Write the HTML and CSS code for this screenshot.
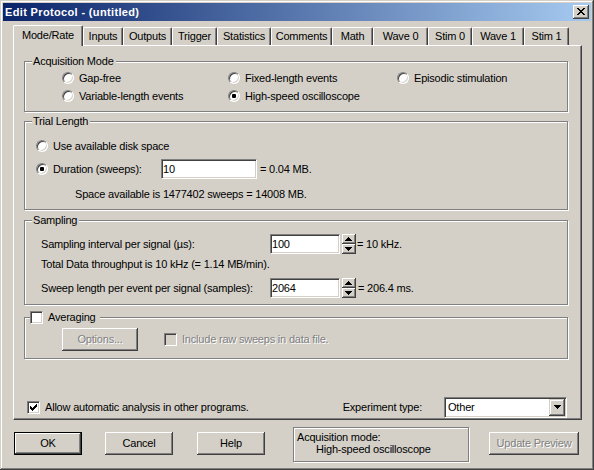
FILE: index.html
```html
<!DOCTYPE html>
<html>
<head>
<meta charset="utf-8">
<title>Edit Protocol</title>
<link rel="stylesheet" href="styles.css">
</head>
<body>
<div class="window">
  <div class="titlebar">
    <span class="title">Edit Protocol - (untitled)</span>
    <span class="close"><svg width="8" height="7" shape-rendering="crispEdges"><path d="M0 0h2v1H0zM6 0h2v1H6zM1 1h2v1H1zM5 1h2v1H5zM2 2h4v1H2zM3 3h2v1H3zM2 4h4v1H2zM1 5h2v1H1zM5 5h2v1H5zM0 6h2v1H0zM6 6h2v1H6z"/></svg></span>
  </div>
  <div class="client">
    <div class="tabs">
      <div class="tab sel">Mode/Rate</div>
      <div class="tab">Inputs</div>
      <div class="tab">Outputs</div>
      <div class="tab">Trigger</div>
      <div class="tab">Statistics</div>
      <div class="tab">Comments</div>
      <div class="tab">Math</div>
      <div class="tab">Wave 0</div>
      <div class="tab">Stim 0</div>
      <div class="tab">Wave 1</div>
      <div class="tab">Stim 1</div>
    </div>
    <div class="panel">
      <div class="group acq">
        <div class="legend">Acquisition Mode</div>
        <div class="acq-grid">
          <div class="opt"><span class="radio"></span>Gap-free</div>
          <div class="opt"><span class="radio"></span>Fixed-length events</div>
          <div class="opt"><span class="radio"></span>Episodic stimulation</div>
          <div class="opt"><span class="radio"></span>Variable-length events</div>
          <div class="opt"><span class="radio on"></span>High-speed oscilloscope</div>
        </div>
      </div>

      <div class="group trial">
        <div class="legend">Trial Length</div>
        <div class="trial-body">
          <div class="opt row1"><span class="radio"></span>Use available disk space</div>
          <div class="dur">
            <div class="opt"><span class="radio on"></span><span class="durlabel">Duration (sweeps):</span></div>
            <span class="edit w96">10</span>
            <span class="after3">= 0.04 MB.</span>
          </div>
          <div class="space">Space available is 1477402 sweeps = 14008 MB.</div>
        </div>
      </div>

      <div class="group samp">
        <div class="legend">Sampling</div>
        <div class="samp-body">
          <div class="srow">
            <span class="slabel">Sampling interval per signal (µs):</span>
            <span class="edit w70">100</span>
            <span class="spin">
              <span class="sbtn"><svg width="7" height="4" shape-rendering="crispEdges"><path d="M3 0h1v1H3zM2 1h3v1H2zM1 2h5v1H1zM0 3h7v1H0z"/></svg></span>
              <span class="sbtn"><svg width="7" height="4" shape-rendering="crispEdges"><path d="M0 0h7v1H0zM1 1h5v1H1zM2 2h3v1H2zM3 3h1v1H3z"/></svg></span>
            </span>
            <span class="after1">= 10 kHz.</span>
          </div>
          <div class="thru">Total Data throughput is 10 kHz (= 1.14 MB/min).</div>
          <div class="srow">
            <span class="slabel">Sweep length per event per signal (samples):</span>
            <span class="edit w70">2064</span>
            <span class="spin">
              <span class="sbtn"><svg width="7" height="4" shape-rendering="crispEdges"><path d="M3 0h1v1H3zM2 1h3v1H2zM1 2h5v1H1zM0 3h7v1H0z"/></svg></span>
              <span class="sbtn"><svg width="7" height="4" shape-rendering="crispEdges"><path d="M0 0h7v1H0zM1 1h5v1H1zM2 2h3v1H2zM3 3h1v1H3z"/></svg></span>
            </span>
            <span class="after2">= 206.4 ms.</span>
          </div>
        </div>
      </div>

      <div class="group avg">
        <div class="legend avg-legend"><span class="check"></span>Averaging</div>
        <div class="avg-body">
          <span class="btn options dis">Options...</span>
          <span class="check disbox"></span>
          <span class="inc dis">Include raw sweeps in data file.</span>
        </div>
      </div>

      <div class="spacer"></div>

      <div class="bottom">
        <div class="opt"><span class="check"><svg width="7" height="7" shape-rendering="crispEdges"><path d="M6 0h1v1H6zM5 1h2v1H5zM0 2h1v1H0zM4 2h3v1H4zM0 3h2v1H0zM3 3h3v1H3zM0 4h5v1H0zM1 5h3v1H1zM2 6h1v1H2z"/></svg></span>Allow automatic analysis in other programs.</div>
        <span class="exp-label">Experiment type:</span>
        <div class="combo">
          <span class="combo-field">Other</span>
          <span class="combo-btn"><svg width="7" height="4" shape-rendering="crispEdges"><path d="M0 0h7v1H0zM1 1h5v1H1zM2 2h3v1H2zM3 3h1v1H3z"/></svg></span>
        </div>
      </div>
    </div>

    <div class="buttons">
      <span class="btn ok">OK</span>
      <span class="btn cancel">Cancel</span>
      <span class="btn help">Help</span>
      <div class="status">
        <div>Acquisition mode:</div>
        <div class="indent">High-speed oscilloscope</div>
      </div>
      <span class="btn update dis">Update Preview</span>
    </div>
  </div>
</div>
</body>
</html>
```

FILE: styles.css
```css
* { box-sizing: border-box; }
html, body { margin: 0; padding: 0; }
body {
  background: #d4d0c8;
  font-family: "Liberation Sans", Arial, sans-serif;
  font-size: 11px;
  line-height: 13px;
  letter-spacing: -0.2px;
  color: #000;
  overflow: hidden;
}
.window {
  width: 594px;
  height: 470px;
  padding: 3px;
  background: #d4d0c8;
  box-shadow: inset -1px -1px #404040, inset 1px 1px #d4d0c8, inset -2px -2px #808080, inset 2px 2px #fff;
  display: flex;
  flex-direction: column;
}
.titlebar {
  height: 18px;
  flex: none;
  display: flex;
  align-items: center;
  justify-content: space-between;
  padding: 0 2px;
  background: linear-gradient(to right, #0a246a, #a6caf0);
}
.title {
  color: #fff;
  font-weight: bold;
  letter-spacing: 0.35px;
}
.close {
  width: 16px;
  height: 14px;
  display: flex;
  align-items: center;
  justify-content: center;
  padding: 0 1px 1px 0;
  background: #d4d0c8;
  box-shadow: inset -1px -1px #404040, inset 1px 1px #fff, inset -2px -2px #808080, inset 2px 2px #d4d0c8;
}
.close svg, .check svg, .sbtn svg, .combo-btn svg { display: block; fill: #000; }

.client {
  flex: 1;
  padding: 4px 9px 0 10px;
  display: flex;
  flex-direction: column;
}
.tabs {
  display: flex;
  align-items: flex-end;
  height: 20px;
  flex: none;
  position: relative;
  z-index: 1;
}
.tab {
  height: 18px;
  display: flex;
  align-items: center;
  justify-content: center;
  background: #d4d0c8;
  border-top: 1px solid #fff;
  border-left: 1px solid #fff;
  border-right: 1px solid #404040;
  box-shadow: inset -1px 0 #808080;
  border-radius: 2px 2px 0 0;
  white-space: nowrap;
}
.tab.sel {
  height: 21px;
  margin-bottom: -1px;
  padding-bottom: 2px;
}
.tab:nth-child(1) { width: 70px; }
.tab:nth-child(2) { width: 40px; }
.tab:nth-child(3) { width: 49px; }
.tab:nth-child(4) { width: 45px; }
.tab:nth-child(5) { width: 54px; }
.tab:nth-child(6) { width: 61px; }
.tab:nth-child(7) { width: 41px; }
.tab:nth-child(8) { width: 55px; }
.tab:nth-child(9) { width: 44px; }
.tab:nth-child(10) { width: 52px; }
.tab:nth-child(11) { width: 45px; }

.panel {
  width: 569px;
  height: 375px;
  flex: none;
  border: 1px solid;
  border-color: #fff #404040 #404040 #fff;
  box-shadow: inset -1px -1px #808080;
  padding: 15px 14px 1px 10px;
  display: flex;
  flex-direction: column;
}
.group {
  width: 544px;
  flex: none;
  border: 1px solid #808080;
  box-shadow: inset 1px 1px #fff, 1px 1px #fff;
}
.legend {
  display: flex;
  align-items: center;
  width: max-content;
  height: 13px;
  margin: -7px 0 -6px 7px;
  padding: 0 2px 0 1px;
  background: #d4d0c8;
}
.opt {
  display: flex;
  align-items: center;
  gap: 5px;
  white-space: nowrap;
}
.radio {
  width: 12px;
  height: 12px;
  flex: none;
  border-radius: 50%;
  background: #fff;
  border: 1px solid;
  border-color: #808080 #fff #fff #808080;
  box-shadow: inset 1px 1px #404040, inset -1px -1px #d4d0c8;
  display: flex;
  align-items: center;
  justify-content: center;
}
.radio.on::after {
  content: "";
  width: 4px;
  height: 4px;
  background: #000;
  border-radius: 1px;
}
.check {
  width: 13px;
  height: 13px;
  flex: none;
  background: #fff;
  border: 1px solid;
  border-color: #808080 #fff #fff #808080;
  box-shadow: inset 1px 1px #404040, inset -1px -1px #d4d0c8;
  display: flex;
  align-items: center;
  justify-content: center;
}
.check.disbox { background: #d4d0c8; }
.dis { color: #808080; text-shadow: 1px 1px #fff; }

.acq { height: 51px; }
.acq-grid {
  display: grid;
  grid-template-columns: 166px 169px auto;
  grid-auto-rows: 18px;
  padding: 7px 0 0 37px;
}

.trial { height: 89px; margin-top: 9px; }
.trial-body { padding: 15px 0 0 11px; }
.row1 { height: 18px; }
.dur {
  display: flex;
  align-items: center;
  height: 20px;
  margin-top: 4px;
}
.durlabel { width: 108px; }
.edit {
  height: 20px;
  display: flex;
  align-items: center;
  padding-left: 1px;
  background: #fff;
  border: 1px solid;
  border-color: #808080 #fff #fff #808080;
  box-shadow: inset 1px 1px #404040, inset -1px -1px #d4d0c8;
  flex: none;
}
.w96 { width: 96px; }
.w70 { width: 70px; }
.after3 { margin-left: 3px; }
.after1 { margin-left: 1px; }
.after2 { margin-left: 2px; }
.space { margin: 9px 0 0 39px; }

.samp { height: 85px; margin-top: 10px; }
.samp-body { padding: 13px 0 0 16px; }
.srow {
  display: flex;
  align-items: center;
  height: 20px;
  white-space: nowrap;
}
.slabel { width: 229px; flex: none; }
.thru { margin: 4px 0 7px; }
.spin {
  width: 14px;
  height: 20px;
  margin-left: 2px;
  display: flex;
  flex-direction: column;
  flex: none;
}
.sbtn {
  height: 10px;
  display: flex;
  align-items: center;
  justify-content: center;
  background: #d4d0c8;
  box-shadow: inset -1px -1px #404040, inset 1px 1px #fff, inset -2px -2px #808080;
  padding: 0 1px 0 0;
}

.avg { height: 42px; margin-top: 12px; }
.avg-legend {
  margin-left: 5px;
  padding: 0 4px 0 0;
  gap: 5px;
}
.avg-body {
  display: flex;
  align-items: center;
  padding: 10px 0 0 37px;
}
.avg-body .check { margin-left: 26px; }
.inc { margin-left: 5px; white-space: nowrap; }

.btn {
  width: 68px;
  height: 23px;
  flex: none;
  display: flex;
  align-items: center;
  justify-content: center;
  padding-bottom: 1px;
  background: #d4d0c8;
  box-shadow: inset -1px -1px #404040, inset 1px 1px #fff, inset -2px -2px #808080, inset 2px 2px #d4d0c8;
  white-space: nowrap;
}
.btn.options { width: 76px; }

.spacer { flex: 1; }
.bottom {
  display: flex;
  align-items: center;
  padding-left: 3px;
  height: 21px;
  flex: none;
}
.exp-label { margin-left: auto; white-space: nowrap; }
.combo {
  width: 123px;
  height: 21px;
  margin-left: 22px;
  flex: none;
  display: flex;
  padding: 1px;
  background: #fff;
  border: 1px solid;
  border-color: #808080 #fff #fff #808080;
  box-shadow: inset 1px 1px #404040, inset -1px -1px #d4d0c8;
}
.combo-field {
  flex: 1;
  display: flex;
  align-items: center;
  padding-left: 2px;
}
.combo-btn {
  width: 16px;
  height: 17px;
  display: flex;
  align-items: center;
  justify-content: center;
  padding-bottom: 1px;
  background: #d4d0c8;
  box-shadow: inset -1px -1px #404040, inset 1px 1px #d4d0c8, inset -2px -2px #808080, inset 2px 2px #fff;
}

.buttons {
  display: flex;
  align-items: flex-start;
  padding-top: 7px;
}
.buttons .btn { margin-top: 5px; }
.ok {
  margin-left: 1px;
  border: 1px solid #000;
  box-shadow: inset -1px -1px #404040, inset 1px 1px #fff, inset -2px -2px #808080;
}
.cancel { margin-left: 23px; }
.help { margin-left: 24px; }
.status {
  margin-left: 28px;
  width: 176px;
  height: 35px;
  flex: none;
  border: 1px solid #808080;
  box-shadow: inset 1px 1px #fff, 1px 1px #fff;
  padding: 3px 0 0 3px;
  line-height: 12px;
  white-space: nowrap;
}
.status .indent { padding-left: 19px; }
.btn.update { width: 90px; margin-left: 20px; }
```
